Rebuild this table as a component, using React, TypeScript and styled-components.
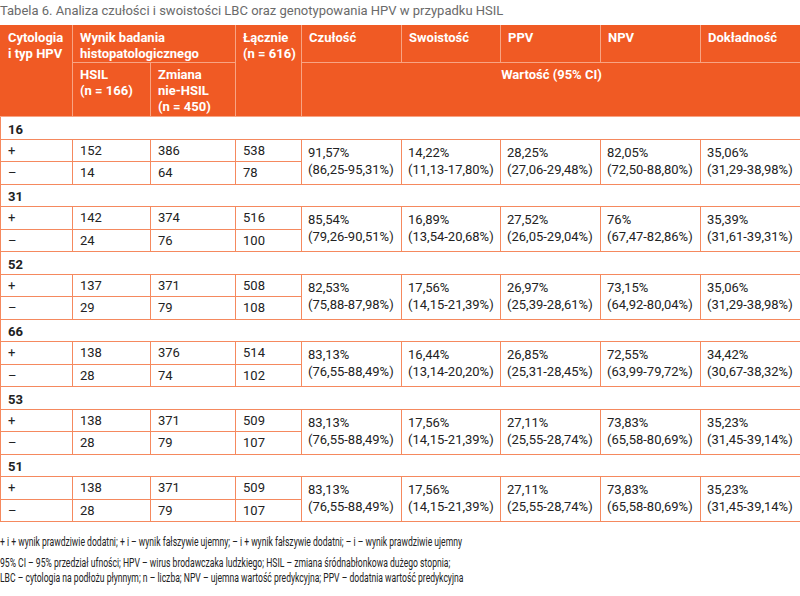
import React from "react";
import styled, { createGlobalStyle } from "styled-components";

const Global = createGlobalStyle`
  html, body { margin: 0; padding: 0; background: #fff; }
  body { font-family: Roboto, "Noto Sans", sans-serif; }
`;

const ORANGE = "#F05A24";
const LINE = "#F5895E";
const HEAD_LINE = "#F8A483";

const Page = styled.div`
  width: 800px;
  overflow: hidden;
`;

const Title = styled.div`
  height: 25px;
  box-sizing: border-box;
  padding-top: 2px;
  font-size: 13px;
  line-height: 18px;
  color: #6a6a6a;
`;

const Table = styled.table`
  width: 800px;
  border-collapse: collapse;
  table-layout: fixed;
  font-size: 13px;
  color: #222;
`;

const HeadRow = styled.tr<{ $h: number }>`
  height: ${(p) => p.$h}px;
`;

const HeadCell = styled.th<{ $center?: boolean; $edge?: boolean }>`
  background: ${ORANGE};
  color: #fff;
  font-weight: 700;
  text-align: ${(p) => (p.$center ? "center" : "left")};
  vertical-align: top;
  padding: 4px 6px 0 7px;
  line-height: 16px;
  white-space: nowrap;
  overflow: hidden;
  border: 1px solid ${HEAD_LINE};
  border-top-color: ${ORANGE};
  ${(p) => (p.$edge ? `border-left-color: ${ORANGE};` : "")}
`;

const BodyRow = styled.tr`
  height: 22.5px;
`;

const GroupCell = styled.td`
  border: 1px solid ${LINE};
  padding: 3px 7px 0;
  font-weight: 700;
  line-height: 17px;
  vertical-align: middle;
`;

const NumCell = styled.td`
  border: 1px solid ${LINE};
  padding: 0 7px;
  line-height: 17px;
  vertical-align: middle;
  white-space: nowrap;
`;

const PctCell = styled.td`
  border: 1px solid ${LINE};
  padding: 4px 4px 0 6px;
  line-height: 17px;
  vertical-align: top;
  white-space: nowrap;
  overflow: hidden;
`;

const Notes = styled.div`
  margin-top: 12px;
  width: 1200px;
  transform: scaleX(0.66);
  transform-origin: left top;
  font-family: Roboto, sans-serif;
  font-size: 13px;
  color: #222;
  line-height: 15px;
`;

const NoteP = styled.p`
  margin: 0 0 6px;
`;

type Group = {
  label: string;
  plus: [string, string, string];
  minus: [string, string, string];
  stats: [string, string][];
};

const groups: Group[] = [
  {
    label: "16",
    plus: ["152", "386", "538"],
    minus: ["14", "64", "78"],
    stats: [
      ["91,57%", "(86,25-95,31%)"],
      ["14,22%", "(11,13-17,80%)"],
      ["28,25%", "(27,06-29,48%)"],
      ["82,05%", "(72,50-88,80%)"],
      ["35,06%", "(31,29-38,98%)"],
    ],
  },
  {
    label: "31",
    plus: ["142", "374", "516"],
    minus: ["24", "76", "100"],
    stats: [
      ["85,54%", "(79,26-90,51%)"],
      ["16,89%", "(13,54-20,68%)"],
      ["27,52%", "(26,05-29,04%)"],
      ["76%", "(67,47-82,86%)"],
      ["35,39%", "(31,61-39,31%)"],
    ],
  },
  {
    label: "52",
    plus: ["137", "371", "508"],
    minus: ["29", "79", "108"],
    stats: [
      ["82,53%", "(75,88-87,98%)"],
      ["17,56%", "(14,15-21,39%)"],
      ["26,97%", "(25,39-28,61%)"],
      ["73,15%", "(64,92-80,04%)"],
      ["35,06%", "(31,29-38,98%)"],
    ],
  },
  {
    label: "66",
    plus: ["138", "376", "514"],
    minus: ["28", "74", "102"],
    stats: [
      ["83,13%", "(76,55-88,49%)"],
      ["16,44%", "(13,14-20,20%)"],
      ["26,85%", "(25,31-28,45%)"],
      ["72,55%", "(63,99-79,72%)"],
      ["34,42%", "(30,67-38,32%)"],
    ],
  },
  {
    label: "53",
    plus: ["138", "371", "509"],
    minus: ["28", "79", "107"],
    stats: [
      ["83,13%", "(76,55-88,49%)"],
      ["17,56%", "(14,15-21,39%)"],
      ["27,11%", "(25,55-28,74%)"],
      ["73,83%", "(65,58-80,69%)"],
      ["35,23%", "(31,45-39,14%)"],
    ],
  },
  {
    label: "51",
    plus: ["138", "371", "509"],
    minus: ["28", "79", "107"],
    stats: [
      ["83,13%", "(76,55-88,49%)"],
      ["17,56%", "(14,15-21,39%)"],
      ["27,11%", "(25,55-28,74%)"],
      ["73,83%", "(65,58-80,69%)"],
      ["35,23%", "(31,45-39,14%)"],
    ],
  },
];

const widths = [72, 78, 85, 66, 100, 99, 100, 100, 100];

export default function App() {
  return (
    <Page>
      <Global />
      <Title>
        Tabela 6. Analiza czułości i swoistości LBC oraz genotypowania HPV w przypadku HSIL
      </Title>
      <Table>
        <colgroup>
          {widths.map((w, i) => (
            <col key={i} style={{ width: w }} />
          ))}
        </colgroup>
        <thead>
          <HeadRow $h={37}>
            <HeadCell rowSpan={2} $edge>
              Cytologia
              <br />i typ HPV
            </HeadCell>
            <HeadCell colSpan={2}>
              Wynik badania
              <br />
              histopatologicznego
            </HeadCell>
            <HeadCell rowSpan={2}>
              Łącznie
              <br />
              (n = 616)
            </HeadCell>
            <HeadCell>Czułość</HeadCell>
            <HeadCell>Swoistość</HeadCell>
            <HeadCell>PPV</HeadCell>
            <HeadCell>NPV</HeadCell>
            <HeadCell>Dokładność</HeadCell>
          </HeadRow>
          <HeadRow $h={54}>
            <HeadCell>
              HSIL
              <br />
              (n = 166)
            </HeadCell>
            <HeadCell>
              Zmiana
              <br />
              nie-HSIL
              <br />
              (n = 450)
            </HeadCell>
            <HeadCell colSpan={5} $center>
              Wartość (95% CI)
            </HeadCell>
          </HeadRow>
        </thead>
        <tbody>
          {groups.map((g) => (
            <React.Fragment key={g.label}>
              <BodyRow>
                <GroupCell colSpan={9}>{g.label}</GroupCell>
              </BodyRow>
              <BodyRow>
                <NumCell>+</NumCell>
                {g.plus.map((v, i) => (
                  <NumCell key={i}>{v}</NumCell>
                ))}
                {g.stats.map(([a, b], i) => (
                  <PctCell key={i} rowSpan={2}>
                    {a}
                    <br />
                    {b}
                  </PctCell>
                ))}
              </BodyRow>
              <BodyRow>
                <NumCell>–</NumCell>
                {g.minus.map((v, i) => (
                  <NumCell key={i}>{v}</NumCell>
                ))}
              </BodyRow>
            </React.Fragment>
          ))}
        </tbody>
      </Table>
      <Notes>
        <NoteP>
          + i + wynik prawdziwie dodatni; + i – wynik fałszywie ujemny; – i + wynik fałszywie dodatni; – i – wynik prawdziwie ujemny
        </NoteP>
        <NoteP>
          95% CI – 95% przedział ufności; HPV – wirus brodawczaka ludzkiego; HSIL – zmiana śródnabłonkowa dużego stopnia;
          <br />
          LBC – cytologia na podłożu płynnym; n – liczba; NPV – ujemna wartość predykcyjna; PPV – dodatnia wartość predykcyjna
        </NoteP>
      </Notes>
    </Page>
  );
}
